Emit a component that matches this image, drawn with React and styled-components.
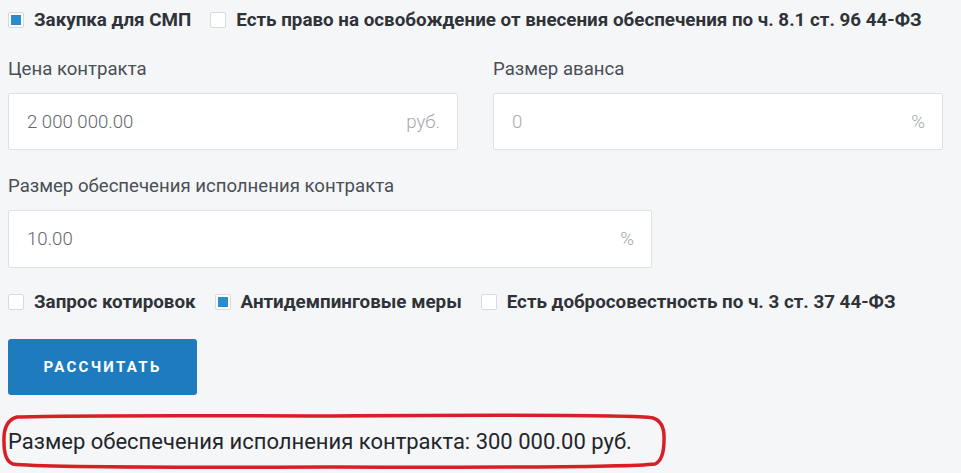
import React from 'react';
import styled, { createGlobalStyle } from 'styled-components';

const GlobalStyle = createGlobalStyle`
    body {
        margin: 0;
        min-height: 100vh;
        background: #f5f6f8;
        font-family: Roboto, "Liberation Sans", sans-serif;
    }
`;

const Page = styled.div`
    padding: 8px 8px 24px 8px;
    width: 945px;
`;

const CheckRow = styled.div`
    display: flex;
    align-items: center;
    height: 24px;
    margin-top: ${(p) => p.top || 0}px;
`;

const CheckItem = styled.label`
    display: flex;
    align-items: center;
    margin-right: 19px;
    font-size: 18.8px;
    font-weight: 700;
    color: #2f3338;
    white-space: nowrap;
`;

const Box = styled.span`
    box-sizing: border-box;
    width: 16px;
    height: 16px;
    margin-right: 10px;
    border: 1px solid #d6dbe0;
    border-radius: 2px;
    background: #fff;
    padding: 2px;
    display: flex;

    &::after {
        content: '';
        flex: 1;
        background: ${(p) => (p.checked ? '#2a8bcd' : 'transparent')};
    }
`;

const Grid = styled.div`
    display: grid;
    grid-template-columns: ${(p) => p.cols || '450px 450px'};
    column-gap: 35px;
    margin-top: ${(p) => p.top || 0}px;
`;

const Field = styled.div`
    display: flex;
    flex-direction: column;
`;

const Label = styled.div`
    font-size: 18.6px;
    color: #4a4f55;
    line-height: 22px;
    margin-bottom: 13px;
`;

const InputBox = styled.div`
    box-sizing: border-box;
    height: ${(p) => p.h || 57}px;
    background: #fff;
    border: 1px solid #dde1e5;
    border-radius: 2px;
    display: flex;
    align-items: center;
    justify-content: space-between;
    padding: 0 17px 0 18px;
    font-size: 18.6px;
    font-weight: 300;
    color: ${(p) => (p.muted ? '#a6abb0' : '#61666b')};
`;

const Unit = styled.span`
    color: #a3a8ad;
    font-weight: 300;
`;

const Button = styled.button`
    margin-top: 25px;
    width: 189px;
    height: 56px;
    border: none;
    border-radius: 3px;
    background: #1e7cbe;
    color: #fff;
    font-family: Roboto, "Liberation Sans", sans-serif;
    font-size: 15px;
    font-weight: 700;
    letter-spacing: 2.3px;
    display: block;
`;

const Result = styled.div`
    position: relative;
    margin-top: 34px;
    font-size: 22px;
    color: #23262a;
    line-height: 26px;
    display: inline-block;
`;

const Ring = styled.svg`
    position: absolute;
    left: -7px;
    top: -15px;
    overflow: visible;
`;

export default function App() {
    return (
        <Page>
            <GlobalStyle />
            <CheckRow>
                <CheckItem>
                    <Box checked />
                    Закупка для СМП
                </CheckItem>
                <CheckItem>
                    <Box />
                    Есть право на освобождение от внесения обеспечения по ч. 8.1 ст. 96 44-ФЗ
                </CheckItem>
            </CheckRow>

            <Grid top={26}>
                <Field>
                    <Label>Цена контракта</Label>
                    <InputBox>
                        2 000 000.00
                        <Unit>руб.</Unit>
                    </InputBox>
                </Field>
                <Field>
                    <Label>Размер аванса</Label>
                    <InputBox muted>
                        0
                        <Unit>%</Unit>
                    </InputBox>
                </Field>
            </Grid>

            <Grid top={25} cols="644px">
                <Field>
                    <Label>Размер обеспечения исполнения контракта</Label>
                    <InputBox h={58}>
                        10.00
                        <Unit>%</Unit>
                    </InputBox>
                </Field>
            </Grid>

            <CheckRow top={22}>
                <CheckItem>
                    <Box />
                    Запрос котировок
                </CheckItem>
                <CheckItem>
                    <Box checked />
                    Антидемпинговые меры
                </CheckItem>
                <CheckItem>
                    <Box />
                    Есть добросовестность по ч. 3 ст. 37 44-ФЗ
                </CheckItem>
            </CheckRow>

            <Button>РАССЧИТАТЬ</Button>

            <Result>
                Размер обеспечения исполнения контракта: 300 000.00 руб.
                <Ring width="664" height="54">
                    <path
                        d="M16 3 Q60 1 330 2 Q632 0 652 4 Q664 8 663 26 Q663 46 654 50 Q620 54 330 53 Q40 54 12 50 Q3 47 3 28 Q2 7 16 3 Z"
                        fill="none"
                        stroke="#d71f28"
                        strokeWidth="3.5"
                    />
                </Ring>
            </Result>
        </Page>
    );
}
